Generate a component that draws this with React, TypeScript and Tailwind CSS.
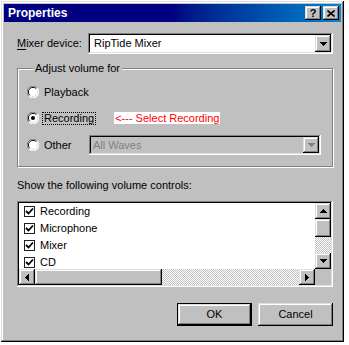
const raised =
  "shadow-[inset_-1px_-1px_#000,inset_1px_1px_#dfdfdf,inset_-2px_-2px_#808080,inset_2px_2px_#fff]";
const sunken =
  "shadow-[inset_-1px_-1px_#fff,inset_1px_1px_#808080,inset_-2px_-2px_#dfdfdf,inset_2px_2px_#000]";
const dither =
  "bg-[image:repeating-conic-gradient(#c0c0c0_0%_25%,#fff_0%_50%)] bg-[length:2px_2px]";

function Arrow({ dir, color = "#000" }: { dir: "up" | "down" | "left" | "right"; color?: string }) {
  const pts = {
    up: "3.5,0 7,4 0,4",
    down: "0,0 7,0 3.5,4",
    left: "4,0 4,7 0,3.5",
    right: "0,0 4,3.5 0,7",
  }[dir];
  const w = dir === "up" || dir === "down" ? 7 : 4;
  const h = dir === "up" || dir === "down" ? 4 : 7;
  return (
    <svg width={w} height={h} viewBox={`0 0 ${w} ${h}`}>
      <polygon points={pts} fill={color} shapeRendering="crispEdges" />
    </svg>
  );
}

function Radio({ checked }: { checked?: boolean }) {
  return (
    <svg width="12" height="12" viewBox="0 0 12 12" className="shrink-0">
      <circle cx="6" cy="6" r="5.5" fill="#fff" />
      <path d="M10.2 1.8A5.5 5.5 0 0 0 1.8 10.2" fill="none" stroke="#808080" strokeWidth="1" />
      <path d="M9.3 2.7A4.3 4.3 0 0 0 2.7 9.3" fill="none" stroke="#000" strokeWidth="1" />
      <path d="M1.8 10.2A5.5 5.5 0 0 0 10.2 1.8" fill="none" stroke="#fff" strokeWidth="1" />
      <path d="M2.7 9.3A4.3 4.3 0 0 0 9.3 2.7" fill="none" stroke="#dfdfdf" strokeWidth="1" />
      {checked && <circle cx="6" cy="6" r="2" fill="#000" />}
    </svg>
  );
}

function Check() {
  return (
    <span className="w-[11px] h-[11px] shrink-0 border border-[#202020] bg-white flex items-center justify-center">
      <svg width="9" height="9" viewBox="0 0 9 9">
        <path d="M1 4 L3.5 6.5 L8 1.5" fill="none" stroke="#000" strokeWidth="1.8" />
      </svg>
    </span>
  );
}

export default function App() {
  const items = ["Recording", "Microphone", "Mixer", "CD"];
  return (
    <div
      className="w-[349px] h-[345px] bg-white pl-[1px] pt-[1px] text-[11px] text-black"
      style={{ fontFamily: '"Liberation Sans", Arial, sans-serif' }}
    >
      <div className="w-[343px] h-[341px] bg-[#c0c0c0] p-[3px] flex flex-col shadow-[inset_-1px_-1px_#000,inset_1px_1px_#dfdfdf,inset_-2px_-2px_#808080,inset_2px_2px_#fff]">
        <div className="h-[18px] flex items-center bg-gradient-to-r from-[#000080] via-[#000080] to-[#1084d0] pl-[4px] pr-[2px]">
          <span className="flex-1 text-white font-bold text-[12px] leading-none">Properties</span>
          <div className={`w-[16px] h-[14px] bg-[#c0c0c0] flex items-center justify-center font-bold text-[11px] leading-none pt-[1px] ${raised}`}>
            ?
          </div>
          <div className={`ml-[2px] w-[16px] h-[14px] bg-[#c0c0c0] flex items-center justify-center ${raised}`}>
            <svg width="8" height="7" viewBox="0 0 8 7">
              <path d="M0.5 0.5 L7.5 6.5 M7.5 0.5 L0.5 6.5" stroke="#000" strokeWidth="1.6" />
            </svg>
          </div>
        </div>

        <div className="flex flex-col pl-[13px] pr-[8px]">
          <div className="mt-[11px] flex items-center h-[21px]">
            <span className="w-[71px]">
              <span className="underline underline-offset-2">M</span>ixer device:
            </span>
            <div className={`flex-1 h-[21px] bg-white flex items-center p-[2px] ${sunken}`}>
              <span className="flex-1 pl-[4px]">RipTide Mixer</span>
              <div className={`w-[16px] h-[17px] bg-[#c0c0c0] flex items-center justify-center ${raised}`}>
                <Arrow dir="down" />
              </div>
            </div>
          </div>

          <fieldset className="mt-[8px] h-[105px] border border-[#808080] shadow-[1px_1px_0_#fff,inset_1px_1px_0_#fff] pl-[9px] pr-[11px]">
            <legend className="ml-[6px] px-[2px] leading-[13px] bg-[#c0c0c0]">Adjust volume for</legend>
            <div className="mt-[7px] h-[20px] flex items-center">
              <Radio />
              <span className="ml-[5px]">Playback</span>
            </div>
            <div className="mt-[6px] h-[20px] flex items-center">
              <Radio checked />
              <span className="ml-[4px] px-[1px] outline outline-1 outline-dotted outline-black leading-[11px]">Recording</span>
              <span className="ml-[19px] bg-white text-[#ff0000] px-[1px] leading-[12px]">
                &lt;--- Select Recording
              </span>
            </div>
            <div className="mt-[7px] h-[20px] flex items-center">
              <div className="w-[62px] flex items-center">
                <Radio />
                <span className="ml-[5px]">Other</span>
              </div>
              <div className={`flex-1 h-[20px] bg-[#c0c0c0] flex items-center p-[2px] ${sunken}`}>
                <span className="flex-1 pl-[2px] text-[#808080]">All Waves</span>
                <div className={`w-[16px] h-[16px] bg-[#c0c0c0] flex items-center justify-center ${raised}`}>
                  <Arrow dir="down" color="#808080" />
                </div>
              </div>
            </div>
          </fieldset>

          <div className="mt-[11px] leading-[14px]">Show the following volume controls:</div>

          <div className={`mt-[9px] h-[86px] bg-white p-[2px] flex flex-col ${sunken}`}>
            <div className="h-[66px] flex">
              <div className="flex-1 overflow-hidden pl-[5px]">
                {items.map((t) => (
                  <div key={t} className="h-[17px] flex items-center">
                    <Check />
                    <span className="ml-[5px]">{t}</span>
                  </div>
                ))}
              </div>
              <div className="w-[16px] flex flex-col">
                <div className={`h-[16px] bg-[#c0c0c0] flex items-center justify-center ${raised}`}>
                  <Arrow dir="up" />
                </div>
                <div className={`h-[18px] bg-[#c0c0c0] ${raised}`} />
                <div className={`flex-1 ${dither}`} />
                <div className={`h-[16px] bg-[#c0c0c0] flex items-center justify-center ${raised}`}>
                  <Arrow dir="down" />
                </div>
              </div>
            </div>
            <div className="h-[16px] flex">
              <div className={`w-[16px] bg-[#c0c0c0] flex items-center justify-center ${raised}`}>
                <Arrow dir="left" />
              </div>
              <div className={`w-[127px] bg-[#c0c0c0] ${raised}`} />
              <div className={`flex-1 ${dither}`} />
              <div className={`w-[16px] bg-[#c0c0c0] flex items-center justify-center ${raised}`}>
                <Arrow dir="right" />
              </div>
              <div className="w-[16px] bg-[#c0c0c0]" />
            </div>
          </div>

          <div className="mt-[16px] flex justify-end gap-[6px]">
            <div className="w-[75px] h-[23px] border border-black">
              <div className={`w-full h-full bg-[#c0c0c0] flex items-center justify-center ${raised}`}>OK</div>
            </div>
            <div className={`w-[75px] h-[23px] bg-[#c0c0c0] flex items-center justify-center ${raised}`}>
              Cancel
            </div>
          </div>
        </div>
      </div>
    </div>
  );
}
